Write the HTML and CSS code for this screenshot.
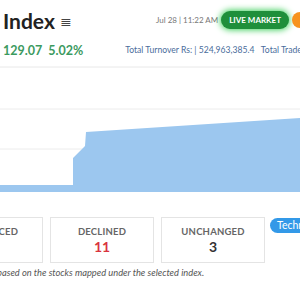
FILE: index.html
```html
<html>

<head>
    <link rel="stylesheet" href="styles.css">
</head>

<body>
    <div id="page">
        <div class="head-row">
            <div class="title">Index <span class="menu-icon">&#8803;</span></div>
            <div class="status">
                <span class="stamp">Jul 28 | 11:22 AM</span>
                <span class="live">LIVE MARKET</span>
                <span class="orange-tab"></span>
            </div>
        </div>
        <div class="value-row">
            <div class="change">
                <span>129.07</span>
                <span>5.02%</span>
            </div>
            <div class="turnover">Total Turnover Rs: | 524,963,385.4 &nbsp; Total Traded Shares</div>
        </div>
        <div class="chart">
            <svg width="300" height="126" viewBox="0 0 300 126">
                <line x1="0" y1="1" x2="300" y2="1" stroke="#e8e8e8" stroke-width="1" />
                <line x1="0" y1="43" x2="300" y2="43" stroke="#ececec" stroke-width="1" />
                <line x1="0" y1="83" x2="300" y2="83" stroke="#ececec" stroke-width="1" />
                <polygon points="0,119 73,119 73,92 85,80 86,66 300,52 300,126 0,126" fill="#9cc7ef" />
            </svg>
        </div>
        <div class="cards">
            <div class="card">
                <div class="label">ADVANCED</div>
                <div class="count up">1</div>
            </div>
            <div class="card">
                <div class="label">DECLINED</div>
                <div class="count down">11</div>
            </div>
            <div class="card">
                <div class="label">UNCHANGED</div>
                <div class="count">3</div>
            </div>
            <span class="tech">Technical</span>
        </div>
        <div class="note">based on the stocks mapped under the selected index.</div>
    </div>
</body>

</html>
```

FILE: styles.css
```css
body {
    margin: 0;
    font-family: Lato, "Open Sans", sans-serif;
    background: #fff;
}

#page {
    width: 300px;
    height: 300px;
    overflow: hidden;
}

.head-row {
    height: 40px;
    display: flex;
    align-items: center;
    justify-content: space-between;
}

.title {
    padding-left: 3px;
    font-size: 21px;
    font-weight: bold;
    color: #222;
    white-space: nowrap;
}

.menu-icon {
    font-size: 14px;
    font-weight: normal;
    color: #444;
    vertical-align: 3px;
}

.status {
    display: flex;
    align-items: center;
    white-space: nowrap;
    margin-right: -8px;
}

.stamp {
    font-size: 8px;
    color: #777;
    margin-right: 3px;
}

.live {
    background: #1f8f3b;
    color: #fff;
    font-size: 8px;
    font-weight: bold;
    padding: 0 8px;
    height: 18px;
    line-height: 18px;
    border-radius: 9px;
    box-shadow: 0 0 6px 1px #3fcf5c;
}

.orange-tab {
    width: 16px;
    height: 16px;
    margin-left: 3px;
    background: #f7931e;
    border-radius: 8px 0 0 8px;
}

.value-row {
    height: 20px;
    display: flex;
    align-items: center;
    white-space: nowrap;
}

.change {
    padding-left: 3px;
    font-size: 12.5px;
    font-weight: bold;
    color: #3c9a5f;
    display: flex;
    gap: 6px;
}

.turnover {
    margin-left: 42px;
    font-size: 8.6px;
    color: #4a6d9c;
}

.chart {
    margin-top: 6px;
    height: 126px;
}

.chart svg {
    display: block;
}

.cards {
    margin-top: 25px;
    margin-left: -61px;
    display: flex;
    align-items: flex-start;
    gap: 7px;
}

.card {
    flex: none;
    width: 102px;
    height: 44px;
    border: 1px solid #e4e4e4;
    text-align: center;
}

.label {
    margin-top: 8px;
    font-size: 9.5px;
    font-weight: bold;
    color: #666;
    letter-spacing: 0.2px;
}

.count {
    margin-top: 1px;
    font-size: 14px;
    font-weight: bold;
    color: #333;
}

.count.up {
    color: #2aa876;
}

.count.down {
    color: #d9343e;
}

.tech {
    flex: none;
    margin-left: -2px;
    margin-top: 1px;
    background: #3399e8;
    color: #fff;
    font-size: 10.5px;
    height: 15px;
    line-height: 15px;
    padding: 0 7px;
    border-radius: 8px;
}

.note {
    margin-top: 4px;
    margin-left: -3px;
    font-size: 9.3px;
    font-style: italic;
    color: #555;
    white-space: nowrap;
}
```
